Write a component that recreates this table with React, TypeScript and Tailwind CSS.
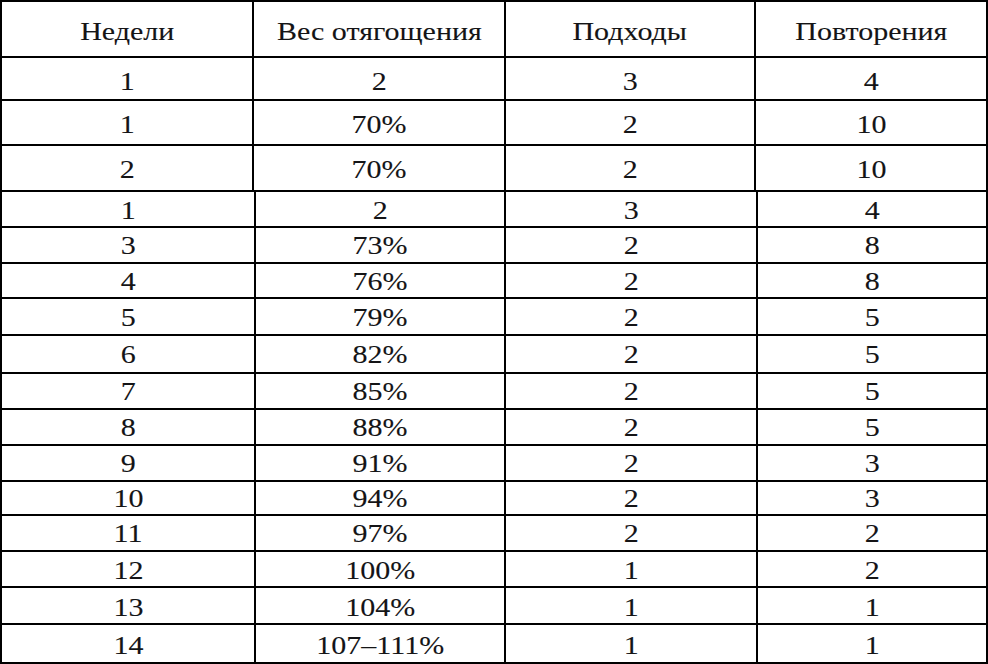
import React from "react";

type Row = { h: string; cells: string[]; pt: string };

const top: Row[] = [
  { h: "h-[43px]", cells: ["1", "2", "3", "4"], pt: "pt-[5px]" },
  { h: "h-[45px]", cells: ["1", "70%", "2", "10"], pt: "pt-[4px]" },
  { h: "h-[46px]", cells: ["2", "70%", "2", "10"], pt: "pt-[2px]" },
];

const bottom: Row[] = [
  { h: "h-[36px]", cells: ["1", "2", "3", "4"], pt: "pt-[3px]" },
  { h: "h-[36px]", cells: ["3", "73%", "2", "8"], pt: "pt-[1px]" },
  { h: "h-[35px]", cells: ["4", "76%", "2", "8"], pt: "pt-[1px]" },
  { h: "h-[37px]", cells: ["5", "79%", "2", "5"], pt: "pt-[1px]" },
  { h: "h-[38px]", cells: ["6", "82%", "2", "5"], pt: "pt-[1px]" },
  { h: "h-[36px]", cells: ["7", "85%", "2", "5"], pt: "pt-[1px]" },
  { h: "h-[36px]", cells: ["8", "88%", "2", "5"], pt: "pt-[1px]" },
  { h: "h-[36px]", cells: ["9", "91%", "2", "3"], pt: "pt-[1px]" },
  { h: "h-[34px]", cells: ["10", "94%", "2", "3"], pt: "pt-[1px]" },
  { h: "h-[36px]", cells: ["11", "97%", "2", "2"], pt: "pt-[1px]" },
  { h: "h-[36px]", cells: ["12", "100%", "1", "2"], pt: "pt-[3px]" },
  { h: "h-[37px]", cells: ["13", "104%", "1", "1"], pt: "pt-[3px]" },
  { h: "h-[37px]", cells: ["14", "107\u2013111%", "1", "1"], pt: "pt-[4px]" },
];

const topCols = ["w-[252px]", "w-[252px]", "w-[250px]", "w-[230px]"];
const botCols = ["w-[254px]", "w-[250px]", "w-[252px]", "w-[228px]"];

function Text({ children }: { children: React.ReactNode }) {
  return (
    <span className="inline-block scale-x-[1.2] whitespace-nowrap text-[25px] leading-none text-[#141416] [-webkit-text-stroke:0.1px_#141416]">
      {children}
    </span>
  );
}

function TableRow({ row, cols, last }: { row: Row; cols: string[]; last?: boolean }) {
  return (
    <div className={`flex ${row.h} ${last ? "" : "border-b-2 border-black"}`}>
      {row.cells.map((c, i) => (
        <div
          key={i}
          className={`${cols[i]} ${i < 3 ? "border-r-2 border-black" : ""} flex items-center justify-center ${row.pt}`}
        >
          <Text>{c}</Text>
        </div>
      ))}
    </div>
  );
}

export default function App() {
  const headers = ["Недели", "Вес отягощения", "Подходы", "Повторения"];
  return (
    <div
      className="w-[988px] h-[664px] bg-white"
      style={{ fontFamily: '"Liberation Serif", "Times New Roman", serif' }}
    >
      <div className="flex flex-col w-[988px] h-[664px] border-2 border-black">
        <div className="flex h-[56px] border-b-2 border-black">
          {headers.map((h, i) => (
            <div
              key={i}
              className={`${topCols[i]} ${i < 3 ? "border-r-2 border-black" : ""} flex items-center justify-center pt-[4px]`}
            >
              <Text>{h}</Text>
            </div>
          ))}
        </div>
        {top.map((r, i) => (
          <TableRow key={"t" + i} row={r} cols={topCols} />
        ))}
        {bottom.map((r, i) => (
          <TableRow key={"b" + i} row={r} cols={botCols} last={i === bottom.length - 1} />
        ))}
      </div>
    </div>
  );
}
